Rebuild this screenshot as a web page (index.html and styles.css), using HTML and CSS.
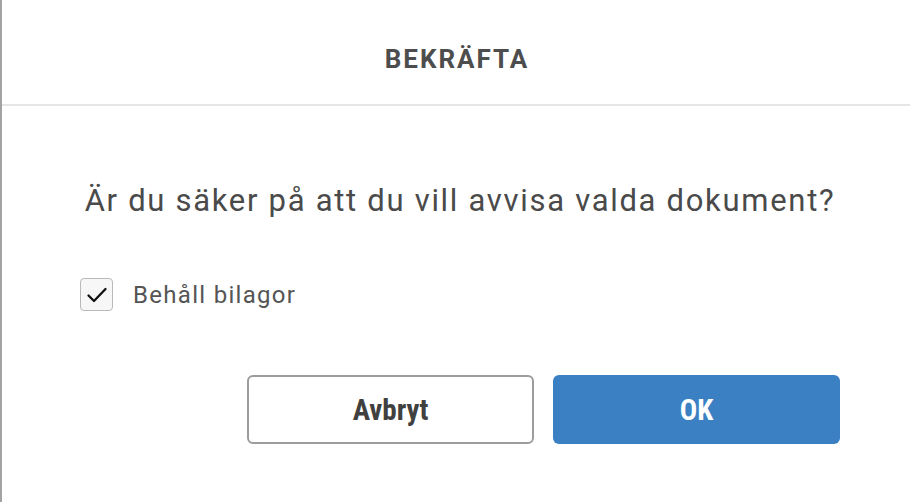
FILE: index.html
```html
<!DOCTYPE html>
<html lang="sv">
<head>
    <meta charset="UTF-8">
    <meta name="viewport" content="width=device-width, initial-scale=1.0">
    <title>Bekräfta</title>
    <link rel="stylesheet" href="styles.css">
</head>
<body>
    <div class="dialog">
        <header class="dialog-header">
            <h1>BEKRÄFTA</h1>
        </header>

        <div class="dialog-body">
            <p class="question">Är du säker på att du vill avvisa valda dokument?</p>

            <label class="keep">
                <span class="box">
                    <svg width="24" height="24" viewBox="0 0 24 24">
                        <path d="M3.5 12.5 L9 18 L20.5 6" fill="none" stroke="#111" stroke-width="2.3" stroke-linecap="round" stroke-linejoin="round"/>
                    </svg>
                </span>
                Behåll bilagor
            </label>

            <div class="actions">
                <button class="btn btn-cancel" type="button">Avbryt</button>
                <button class="btn btn-ok" type="button">OK</button>
            </div>
        </div>
    </div>
</body>
</html>
```

FILE: styles.css
```css
body {
    margin: 0;
    padding: 0;
    background-color: #fff;
    font-family: Roboto, "Liberation Sans", sans-serif;
}

.dialog {
    height: 502px;
    box-sizing: border-box;
    border-left: 2px solid #a3a3a3;
    background-color: #fff;
}

.dialog-header {
    height: 106px;
    box-sizing: border-box;
    padding-top: 14px;
    display: flex;
    align-items: center;
    justify-content: center;
    border-bottom: 2px solid #e6e6e6;
}

.dialog-header h1 {
    margin: 0;
    padding-left: 2px;
    font-size: 26px;
    font-weight: 700;
    color: #4d4d4d;
    letter-spacing: 2px;
}

.dialog-body {
    padding: 0 70px 0 78px;
}

.question {
    margin: 0;
    padding-top: 77px;
    text-align: center;
    font-size: 31px;
    line-height: 36px;
    color: #4a4a4a;
    letter-spacing: 1.7px;
}

.keep {
    display: flex;
    align-items: center;
    gap: 20px;
    margin-top: 59px;
    font-size: 24px;
    color: #555;
    letter-spacing: 1.3px;
}

.box {
    width: 31px;
    height: 31px;
    border: 1px solid #b9b9b9;
    border-radius: 4px;
    background-color: #f7f7f7;
    display: flex;
    align-items: center;
    justify-content: center;
}

.actions {
    display: flex;
    justify-content: flex-end;
    gap: 19px;
    margin-top: 64px;
}

.btn {
    width: 287px;
    height: 69px;
    border-radius: 6px;
    font-family: Roboto, "Liberation Sans", sans-serif;
    font-size: 29px;
    font-weight: 700;
    font-stretch: 85%;
    cursor: pointer;
}

.btn-cancel {
    background-color: #fff;
    border: 2px solid #9c9c9c;
    color: #404040;
}

.btn-ok {
    background-color: #3a80c3;
    border: none;
    color: #fff;
}
```
